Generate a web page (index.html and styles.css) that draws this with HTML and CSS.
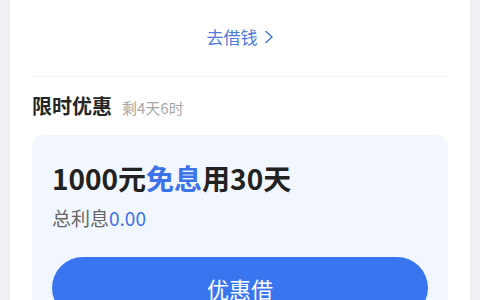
FILE: index.html
```html
<!DOCTYPE html>
<html lang="zh-CN">
<head>
  <meta charset="UTF-8">
  <meta name="viewport" content="width=device-width, initial-scale=1.0">
  <title>限时优惠</title>
  <link rel="stylesheet" href="styles.css">
</head>
<body>
  <div class="card">
    <div class="go-link">
      <a href="#">去借钱</a>
      <svg class="arrow" width="10" height="14" viewBox="0 0 10 14">
        <path d="M2 1.5 L8 7 L2 12.5" fill="none" stroke="#4d7bd9" stroke-width="1.6" stroke-linecap="round" stroke-linejoin="round"/>
      </svg>
    </div>
    <div class="promo-head">
      <h2>限时优惠</h2>
      <span class="countdown">剩4天6时</span>
    </div>
    <div class="offer">
      <div class="offer-title">1000元<span class="hl">免息</span>用30天</div>
      <div class="offer-sub">总利息<span class="num">0.00</span></div>
      <button class="borrow">优惠借</button>
    </div>
  </div>
</body>
</html>
```

FILE: styles.css
```css
body {
  margin: 0;
  background-color: #eff0f5;
  font-family: "Noto Sans CJK SC", "Noto Sans", sans-serif;
  color: #222;
}

.card {
  margin: 0 10px;
  padding: 0 22px;
  height: 300px;
  background-color: #fff;
}

.go-link {
  height: 76px;
  display: flex;
  align-items: center;
  justify-content: center;
  gap: 6px;
  border-bottom: 1px solid #f3f4f6;
}

.go-link a {
  color: #4d7bd9;
  font-size: 17px;
  text-decoration: none;
  line-height: 24px;
  margin-top: -2px;
}

.arrow {
  margin-top: -2px;
}

.promo-head {
  display: flex;
  align-items: baseline;
  gap: 10px;
  margin-top: 15px;
  height: 28px;
}

.promo-head h2 {
  margin: 0;
  font-size: 20px;
  line-height: 28px;
  font-weight: bold;
  color: #262626;
}

.countdown {
  font-size: 15px;
  color: #a8a8a8;
}

.offer {
  margin-top: 15px;
  padding: 25px 20px 0;
  height: 200px;
  border-radius: 12px;
  background-color: #f2f6fe;
}

.offer-title {
  font-size: 28px;
  line-height: 36px;
  font-weight: bold;
  color: #222;
}

.offer-title .hl {
  color: #3d73e8;
}

.offer-sub {
  margin-top: 9px;
  font-size: 19px;
  line-height: 26px;
  color: #666;
}

.offer-sub .num {
  color: #3d73e8;
}

.borrow {
  display: block;
  width: 100%;
  height: 62px;
  margin-top: 26px;
  border: none;
  border-radius: 31px;
  background-color: #3a75f0;
  color: #fff;
  font-family: inherit;
  font-size: 22px;
  cursor: pointer;
}
```
